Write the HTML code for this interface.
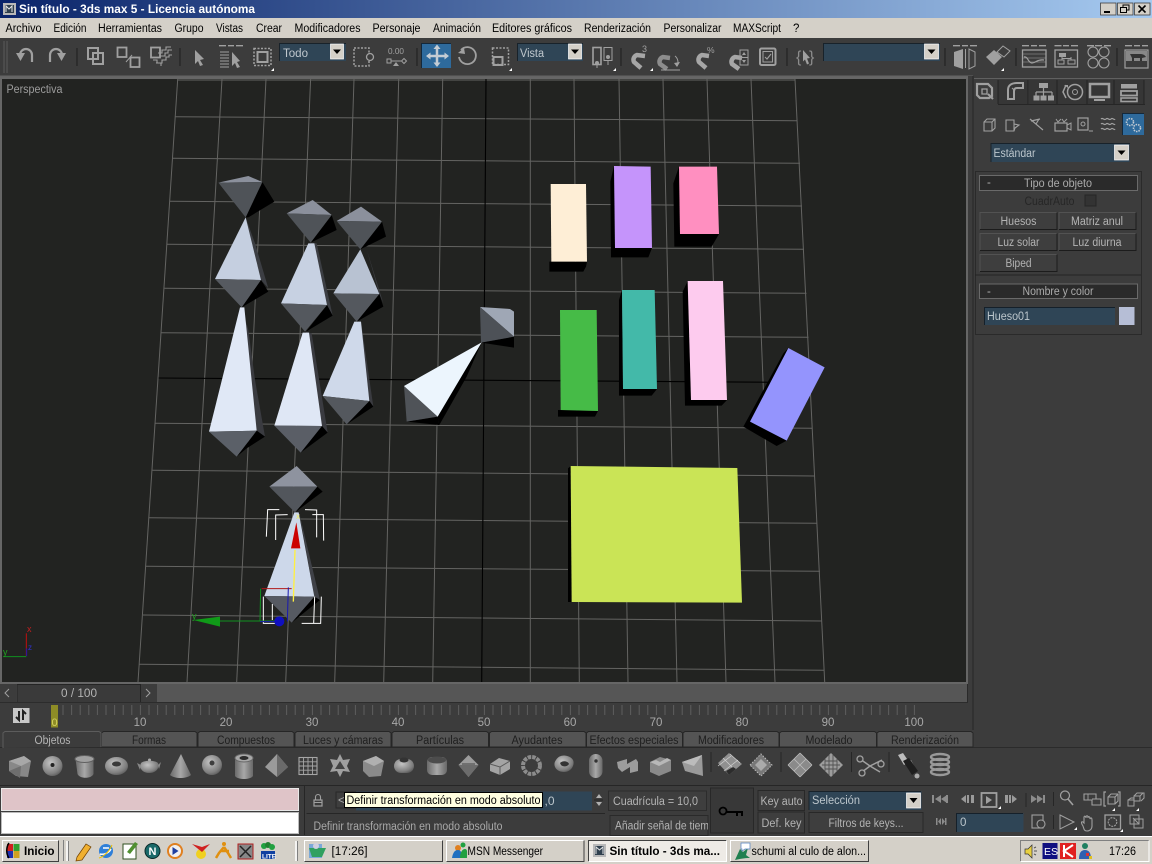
<!DOCTYPE html>
<html><head><meta charset="utf-8"><title>Sin título - 3ds max 5</title>
<style>
html,body{margin:0;padding:0;background:#3c3c3c;width:1152px;height:864px;overflow:hidden}
svg{display:block;position:absolute;left:0;top:0}
text{font-family:"Liberation Sans",sans-serif;font-size:11.5px;fill:#b4b4b4;white-space:pre}
.m{fill:#000;font-size:11.5px}
.c{text-anchor:middle}
.l{fill:#a8a8a8}
.g line{stroke:#646462;stroke-width:1}
.hi{stroke:#525252;fill:none}
.lo{stroke:#1c1c1c;fill:none}
.wh{stroke:#fff;fill:none}
.i{stroke:#a0a0a0;fill:none}
.f{fill:#a0a0a0;stroke:none}
.d{stroke:#a0a0a0;stroke-width:1.5;fill:none;stroke-dasharray:2 1.5}
</style></head><body>
<svg width="1152" height="864" viewBox="0 0 1152 864" xmlns="http://www.w3.org/2000/svg">
<defs>
<linearGradient id="tb" x1="0" x2="1" y1="0" y2="0"><stop offset="0" stop-color="#0a246a"/><stop offset="1" stop-color="#a6caf0"/></linearGradient>
<radialGradient id="s" cx=".4" cy=".35" r=".75"><stop offset="0" stop-color="#c4c4c4"/><stop offset=".7" stop-color="#808080"/><stop offset="1" stop-color="#505050"/></radialGradient>
<linearGradient id="v" x1="0" x2="1" y1="0" y2="0"><stop offset="0" stop-color="#6a6a6a"/><stop offset=".5" stop-color="#a8a8a8"/><stop offset="1" stop-color="#686868"/></linearGradient>
</defs>

<!-- title bar -->
<rect x="0" y="0" width="1152" height="18" fill="url(#tb)"/>
<rect x="3" y="3" width="13" height="12" fill="#b8b8b8"/><rect x="5" y="5" width="9" height="8" fill="#30404e"/><path d="M6 12V6l3 3 3-3v6" stroke="#e8e8e8" fill="none"/>
<text x="19" y="13" textLength="236" lengthAdjust="spacingAndGlyphs" style="fill:#fff;font-weight:bold;font-size:12px">Sin título - 3ds max 5 - Licencia autónoma</text>
<g>
<rect x="1100.5" y="3" width="15.5" height="12" fill="#d4d0c8" stroke="#404040" stroke-width=".8"/><rect x="1104" y="11" width="6" height="2" fill="#000"/>
<rect x="1117.5" y="3" width="15.5" height="12" fill="#d4d0c8" stroke="#404040" stroke-width=".8"/><rect x="1123" y="5" width="6" height="5" fill="none" stroke="#000"/><rect x="1120.5" y="7.5" width="6" height="5" fill="#d4d0c8" stroke="#000"/>
<rect x="1134.5" y="3" width="15.5" height="12" fill="#d4d0c8" stroke="#404040" stroke-width=".8"/><path d="M1138.5 5.5l7 7m0-7l-7 7" stroke="#000" stroke-width="1.6"/>
</g>

<!-- menu -->
<rect x="0" y="18" width="1152" height="20" fill="#d4d0c8"/>
<g>
<text class="m" x="5.5" y="32" textLength="36" lengthAdjust="spacingAndGlyphs">Archivo</text>
<text class="m" x="53.5" y="32" textLength="33" lengthAdjust="spacingAndGlyphs">Edición</text>
<text class="m" x="98" y="32" textLength="64" lengthAdjust="spacingAndGlyphs">Herramientas</text>
<text class="m" x="174.5" y="32" textLength="29" lengthAdjust="spacingAndGlyphs">Grupo</text>
<text class="m" x="216" y="32" textLength="27" lengthAdjust="spacingAndGlyphs">Vistas</text>
<text class="m" x="256" y="32" textLength="26" lengthAdjust="spacingAndGlyphs">Crear</text>
<text class="m" x="294.5" y="32" textLength="66" lengthAdjust="spacingAndGlyphs">Modificadores</text>
<text class="m" x="372.5" y="32" textLength="48" lengthAdjust="spacingAndGlyphs">Personaje</text>
<text class="m" x="433" y="32" textLength="48" lengthAdjust="spacingAndGlyphs">Animación</text>
<text class="m" x="492" y="32" textLength="80" lengthAdjust="spacingAndGlyphs">Editores gráficos</text>
<text class="m" x="584" y="32" textLength="67" lengthAdjust="spacingAndGlyphs">Renderización</text>
<text class="m" x="663.5" y="32" textLength="58" lengthAdjust="spacingAndGlyphs">Personalizar</text>
<text class="m" x="733" y="32" textLength="48" lengthAdjust="spacingAndGlyphs">MAXScript</text>
<text class="m" x="793" y="32">?</text>
</g>

<!-- toolbar -->
<rect x="0" y="38" width="1152" height="38" fill="#3c3c3c"/>
<path d="M4 41V73M7 41V73" stroke="#565656" stroke-width="1.2"/>
<path d="M77 48V66M180 48V66M417 48V66M621 48V66M787 48V66M945 48V66M1016 48V66M1117 48V66" stroke="#232323" stroke-width="1.2"/>
<!-- undo/redo -->
<path d="M20 58v-3a6 6 0 0 1 12 0v7" class="i" stroke-width="2.2"/><path d="M16 53h9l-4.500 8z" class="f"/>
<path d="M62 58v-3a6 6 0 0 0-12 0v7" class="i" stroke-width="2.200"/><path d="M66 53h-9l4.500 8z" class="f"/>
<!-- link etc -->
<rect x="88" y="48" width="10" height="11" class="i" stroke-width="2"/><rect x="93" y="53" width="10" height="11" class="i" stroke-width="2"/>
<rect x="117.500" y="47.500" width="9" height="9.500" class="i" stroke-width="1.800"/><rect x="130.500" y="57.500" width="9" height="9.500" class="i" stroke-width="1.800"/><path d="M126 62l6-7" class="i" stroke-width="1"/>
<rect x="151" y="47.500" width="9" height="10" class="i" stroke-width="1.800"/><path d="M153 60h4v3h4v3M158 53h4v-3h4v-3h5M160 56h5v-3h3v-3h4M156 63h6v-3h4v-3h3v-2h3" class="i" stroke-width="1.100"/>
<!-- select -->
<path d="M195 50l9 9-4 1 3 5-3 1-2-5-3 3z" class="f"/>
<path d="M219 45.700h7M228 45.700h6M236 45.700h7" class="i" stroke-width="1.400"/><path d="M220 52h9M220 55h9M220 58h9M220 61h9M220 64h9M220 67h9" class="i" stroke-width="1"/><path d="M232 52l8 9-3 1 3 5-3 1-2-5-3 3z" class="f"/>
<rect x="254" y="48.500" width="17" height="17" class="d"/><rect x="257.500" y="52" width="10" height="10" class="i" stroke-width="2"/>
<path d="M271 71l3-3v3z" fill="#fff"/>
<!-- Todo dropdown -->
<rect x="279" y="43" width="67" height="18" fill="#2f4556"/><path d="M279.500 61V43.500H346" stroke="#18222a" fill="none"/>
<text x="283" y="57" textLength="25" lengthAdjust="spacingAndGlyphs" style="fill:#c0c8ce">Todo</text>
<rect x="330.500" y="44" width="13" height="15" fill="#d4d0c8" stroke="#fff" stroke-width=".7"/><path d="M333 49.500h8l-4 4.500z" fill="#000"/>
<!-- filter -->
<rect x="354" y="48" width="15" height="18" class="d"/><circle cx="370" cy="57" r="3.500" class="i" stroke-width="1.300" style="fill:#3c3c3c"/>
<text x="388" y="54" textLength="16" lengthAdjust="spacingAndGlyphs" style="font-size:8.500px;fill:#a0a0a0">0.00</text>
<rect x="387" y="59" width="4" height="4" class="i" stroke-width="1"/><path d="M391 61h10" class="i" stroke-width="1"/><path d="M396 62l-3 4h6z" class="f"/><path d="M404 58.500l2.500 2.500-2.500 2.500-2.500-2.500z" class="i" stroke-width="1"/>
<!-- move -->
<rect x="421" y="43" width="30" height="25" fill="#2e6a9c"/><path d="M421.500 68V43.500H451" stroke="#14283a" fill="none"/>
<path d="M428 56h19M437 46.500v19" stroke="#c4ccd4" stroke-width="2.500"/><path d="M437 44.500l3.500 4.500h-7zM437 67l3.500-4.500h-7zM426 56l4.500-3.500v7zM449 56l-4.500-3.500v7z" fill="#c4ccd4"/>
<!-- rotate -->
<path d="M461 50a8.500 8.500 0 1 1-2 7" class="i" stroke-width="1.800"/><path d="M458 53l6-5 1 6z" class="f"/>
<!-- scale -->
<rect x="492.500" y="48" width="16" height="16.500" class="d"/><rect x="493.500" y="57" width="9" height="8" class="i" stroke-width="2"/>
<path d="M509 71l3-3v3z" fill="#fff"/>
<!-- Vista dropdown -->
<rect x="517" y="43" width="66" height="18" fill="#2f4556"/><path d="M517.500 61V43.500H583" stroke="#18222a" fill="none"/>
<text x="520" y="57" textLength="24" lengthAdjust="spacingAndGlyphs" style="fill:#c0c8ce">Vista</text>
<rect x="568.500" y="44" width="13" height="15" fill="#d4d0c8" stroke="#fff" stroke-width=".7"/><path d="M571 49.500h8l-4 4.500z" fill="#000"/>
<!-- pivot -->
<rect x="593" y="47.500" width="8" height="17" class="i" stroke-width="1.600"/><rect x="604" y="47.500" width="8" height="13" class="i" stroke-width="1"/><circle cx="597" cy="63" r="2" class="f"/><circle cx="608" cy="57" r="2" class="f"/><path d="M597 65v3M608 60v5" class="i" stroke-width="1"/>
<path d="M613 71l3-3v3z" fill="#fff"/>
<!-- magnets -->
<g fill="none" stroke-width="4.500">
<path d="M645 56l-8-1a5 5 0 0 0-3 7l7 6" stroke="#a6a6a6"/>
<path d="M670 58l-7-1a5 5 0 0 0-3 7l7 5" stroke="#8c8c8c"/>
<path d="M709 56l-7-1a5 5 0 0 0-3 7l7 6" stroke="#a6a6a6"/>
<path d="M742 58l-7-1a5 5 0 0 0-3 7l7 5" stroke="#a6a6a6"/>
</g>
<text x="642" y="52" style="font-size:9px;fill:#a0a0a0">3</text>
<path d="M661 70h19M675 56a8 8 0 0 1 2 10" class="i" stroke-width="1"/><path d="M680 62l-3 5-3-4z" class="f"/>
<text x="707" y="53" style="font-size:8.500px;fill:#a0a0a0">%</text>
<rect x="740" y="50" width="8" height="15" class="i" stroke-width="1"/><path d="M744 52l-2 3h4zM744 63l-2-3h4z" class="f"/><path d="M740 57.500h8" class="i" stroke-width="1"/>
<path d="M650 71l3-3v3z" fill="#fff"/>
<rect x="760" y="48.500" width="15.500" height="16.500" rx="1.500" class="i" stroke-width="2"/><rect x="763" y="51.500" width="9.500" height="10.500" class="i" stroke-width="1"/><path d="M765 57l2 2 4-5" class="i" stroke-width="1.100"/>
<!-- {} -->
<text x="796" y="62" style="font-size:16px;fill:#8c8c8c">{</text><text x="809" y="62" style="font-size:16px;fill:#8c8c8c">}</text><path d="M803 50l7 8-3 .500 2 5-2 1-2-5-2 2z" class="f"/>
<!-- sel dropdown -->
<rect x="823" y="43" width="117" height="18" fill="#2f4556"/><path d="M823.500 61V43.500H940" stroke="#18222a" fill="none"/>
<rect x="924.500" y="44" width="14" height="15" fill="#d4d0c8" stroke="#fff" stroke-width=".7"/><path d="M927.500 49.500h8l-4 4.500z" fill="#000"/>
<!-- mirror -->
<path d="M953 45.700h7M962 45.700h6M970 45.700h7" class="i" stroke-width="1.400"/><path d="M954 52l9-3v20l-9-3z" class="f"/><path d="M975 52l-6-3v20l6-3z" class="i" stroke-width="1"/><path d="M965.500 49v19" class="i" stroke-width="1"/>
<!-- align -->
<path d="M986 57l8-7 8 7-8 8z" class="f"/><path d="M997 52l6-6 7 5-6 6z" class="i" stroke-width="1"/><path d="M1001 71l3-3v3z" fill="#fff"/>
<!-- track -->
<path d="M1022 45.700h7M1031 45.700h6M1039 45.700h7M1054.500 45.700h7M1063 45.700h6M1071 45.700h7M1087 45.700h7M1095 45.700h7M1104 45.700h7M1125 45.700h7M1134 45.700h6M1142 45.700h6" class="i" stroke-width="1.400"/>
<rect x="1022.500" y="50" width="23.500" height="17" class="i" stroke-width="1.300"/><path d="M1022 54h24M1022 58h24M1022 62h24" class="i" stroke-width=".6"/><path d="M1024 57c4-1 4 6 8 6s5-4 12-3" class="i" stroke-width="1.200"/>
<rect x="1055" y="50" width="22.500" height="17" class="i" stroke-width="1.300"/><rect x="1059" y="53" width="7" height="4" class="f"/><rect x="1068" y="60" width="7" height="4" class="i" stroke-width="1"/><rect x="1058" y="60" width="6" height="4" class="i" stroke-width="1"/><path d="M1062 57v3M1071 57v3M1062 58.500h9" class="i" stroke-width="1"/>
<g class="i" stroke-width="1.100"><circle cx="1093" cy="52" r="5"/><circle cx="1104" cy="52" r="5"/><circle cx="1093" cy="63" r="5"/><circle cx="1104" cy="63" r="5"/></g>
<rect x="1125" y="50" width="23" height="18" class="i" stroke-width="1.200"/><rect x="1126" y="51" width="21" height="10" fill="#888"/><path d="M1130 54h10c3 0 5 1 6 3l-4 1v3h-2v-3h-6v3h-2v-3z" fill="#333"/>
<path d="M0 76.500H973" stroke="#646464" stroke-width="2"/>

<!-- viewport -->
<rect x="0" y="77" width="968" height="607" fill="#666"/>
<rect x="2" y="79" width="964" height="603" fill="#222321"/>
<text x="6.500" y="93" textLength="56" lengthAdjust="spacingAndGlyphs" style="fill:#9c9c9c">Perspectiva</text>
<g class="g">
<line x1="177.700" y1="79" x2="138" y2="682"/><line x1="222" y1="79" x2="187" y2="682"/><line x1="266" y1="79" x2="236.700" y2="682"/><line x1="310.600" y1="79" x2="285.700" y2="682"/><line x1="354" y1="79" x2="334.700" y2="682"/><line x1="398.700" y1="79" x2="383.700" y2="682"/><line x1="442.700" y1="79" x2="432.700" y2="682"/><line x1="530.300" y1="79" x2="530.300" y2="682"/><line x1="574" y1="79" x2="579.300" y2="682"/><line x1="619" y1="79" x2="628" y2="682"/><line x1="663" y1="79" x2="677" y2="682"/><line x1="707" y1="79" x2="726" y2="682"/><line x1="751" y1="79" x2="775" y2="682"/><line x1="795" y1="79" x2="824.700" y2="682"/>
<line x1="177.700" y1="80" x2="795" y2="80"/><line x1="175" y1="116.700" x2="797" y2="120.700"/><line x1="172.500" y1="158.300" x2="800" y2="163.300"/><line x1="170" y1="201.300" x2="802" y2="206"/><line x1="167" y1="244.300" x2="804" y2="249.300"/><line x1="164.500" y1="288.300" x2="806.500" y2="293.300"/><line x1="161.500" y1="332.700" x2="808.500" y2="337.300"/><line x1="155.500" y1="423.300" x2="812.500" y2="428.300"/><line x1="152.500" y1="470.300" x2="815" y2="476"/><line x1="149" y1="517.700" x2="817" y2="523.300"/><line x1="146" y1="566.300" x2="820" y2="571.300"/><line x1="143" y1="615" x2="822" y2="621"/><line x1="139.500" y1="664.300" x2="824" y2="670.300"/>
</g>
<path d="M486 79L481.700 682M158.500 378L810.500 382.500" stroke="#000" stroke-width="1.100" fill="none"/>

<!-- boxes -->
<g transform="translate(530 150) scale(.33333)">
<polygon points="58,335 171,335 168,350 160,365 58,365" fill="#000"/>
<polygon points="62,102 168,102 171,335 64,335" fill="#feeed6"/>
<polygon points="241,95 252,48 255,294 366,294 355,322 243,322" fill="#000"/>
<polygon points="252,48 362,50 366,294 255,294" fill="#c594fb"/>
<polygon points="430,100 447,50 450,252 567,252 545,290 433,290" fill="#000"/>
<polygon points="447,50 561,50 567,252 450,252" fill="#ff8fc0"/>
<polygon points="84,780 204,783 195,800 84,800" fill="#000"/>
<polygon points="90,480 200,480 204,783 92,780" fill="#46bb47"/>
<polygon points="267,450 276,420 279,717 381,717 365,737 267,737" fill="#000"/>
<polygon points="276,420 374,420 381,717 279,717" fill="#43b9a9"/>
<polygon points="458,425 473,393 483,750 591,750 575,767 465,767" fill="#000"/>
<polygon points="473,393 579,393 591,750 483,750" fill="#fdcbee"/>
<polygon points="760,610 775,594 770,872 740,888 640,830" fill="#000"/>
<polygon points="775,594 884,652 770,872 660,815" fill="#9494fd"/>
</g>
<g transform="translate(480 400) scale(.33333)">
<polygon points="264,205 272,198 275,606 264,606" fill="#000"/>
<polygon points="272,198 772,204 786,608 275,606" fill="#cae456"/>
</g>

<!-- bones -->
<g transform="translate(180 160) scale(.33333)">
<polygon points="247,66 283,125 205,172 197,172" fill="#000"/>
<polygon points="115,68 205,48 247,66" fill="#8b909c"/>
<polygon points="115,68 247,66 197,172" fill="#4f5358"/>
<polygon points="197,172 225,250 265,385 243,360" fill="#3c3e43"/>
<polygon points="197,172 243,360 105,357" fill="#c5cfe0"/>
<polygon points="243,360 265,395 185,442" fill="#000"/>
<polygon points="105,357 243,360 185,442" fill="#565a60"/>
<polygon points="185,442 205,510 225,660 255,830 230,812" fill="#3a3b40"/>
<polygon points="180,442 193,442 230,812 87,815" fill="#e0e8f6"/>
<polygon points="230,812 255,830 200,865 170,890" fill="#000"/>
<polygon points="87,815 230,812 170,890" fill="#5b6068"/>

<polygon points="455,165 470,210 392,248" fill="#000"/>
<polygon points="320,160 398,120 455,165" fill="#8b909c"/>
<polygon points="320,160 455,165 392,248" fill="#4f5358"/>
<polygon points="392,248 410,250 458,467 441,435" fill="#3c3e43"/>
<polygon points="385,250 403,250 441,435 303,430" fill="#c7d1e2"/>
<polygon points="441,435 458,467 378,515" fill="#000"/>
<polygon points="303,430 441,435 375,515" fill="#54585e"/>
<polygon points="378,515 395,520 443,818 426,798" fill="#3a3b40"/>
<polygon points="368,518 387,518 426,798 283,797" fill="#dfe7f5"/>
<polygon points="426,798 443,818 362,878" fill="#000"/>
<polygon points="283,797 426,798 362,878" fill="#5a5e66"/>

<polygon points="606,185 618,230 541,268" fill="#000"/>
<polygon points="470,183 543,140 606,185" fill="#8b909c"/>
<polygon points="470,183 606,185 541,268" fill="#4f5358"/>
<polygon points="560,268 610,430 598,402" fill="#3c3e43"/>
<polygon points="541,268 598,402 460,400" fill="#b8c2d2"/>
<polygon points="598,402 610,440 530,485" fill="#000"/>
<polygon points="460,400 598,402 530,485" fill="#54585e"/>
<polygon points="543,485 580,740 568,723" fill="#3a3b40"/>
<polygon points="523,485 543,485 568,723 428,708" fill="#cfd9ea"/>
<polygon points="568,723 580,740 500,793" fill="#000"/>
<polygon points="428,708 568,723 500,793" fill="#54585e"/>

<polygon points="1002,530 1002,563 903,548" fill="#000"/>
<polygon points="900,441 990,447 1002,455 1002,530" fill="#9fa7b5"/>
<polygon points="900,441 1002,530 903,548" fill="#4d5157"/>
<polygon points="680,785 773,770 778,795" fill="#000"/>
<polygon points="905,547 860,650 778,795 773,770" fill="#000"/>
<polygon points="672,678 773,770 680,785" fill="#4f5358"/>
<polygon points="905,547 773,770 672,678" fill="#ecf5fd"/>
</g>
<g transform="translate(180 460) scale(.33333)">
<polygon points="412,80 428,95 345,157" fill="#000"/>
<polygon points="268,80 350,18 412,80" fill="#8e939f"/>
<polygon points="268,80 412,80 345,157" fill="#52565c"/>
<polygon points="358,160 420,420 403,410" fill="#3f4147"/>
<polygon points="343,157 356,157 403,410 253,408" fill="#cdd8ea"/>
<polygon points="403,410 420,420 335,488" fill="#000"/>
<polygon points="253,408 403,410 335,488" fill="#565a62"/>
</g>
<!-- gizmo -->
<g transform="translate(0 400) scale(.33333)" fill="none">
<g stroke="#fff" stroke-width="3">
<path d="M799 410L803 329H838M827 420V345L863 344M915 329L950 330V412M937 344H970L971 422"/>
<path d="M790 590V670H825M817 612V660M905 670H962L964 590M941 670L944 590"/>
</g>
<path d="M885 450L880 605" stroke="#fff040" stroke-width="4"/>
<polygon points="889,367 873,445 901,445" fill="#cc0000"/>
<path d="M875 566H785" stroke="#b01818" stroke-width="3"/>
<path d="M782 566L780 664M660 663H825" stroke="#109020" stroke-width="3"/>
<path d="M865 562L862 664M780 665H840" stroke="#1818b0" stroke-width="3"/>
<circle cx="838" cy="664" r="15" fill="#1010c0"/>
<polygon points="580,660 660,650 660,680" fill="#109a18"/>
<path d="M79 700V768" stroke="#c01010" stroke-width="3"/>
<path d="M10 770H79" stroke="#109020" stroke-width="3"/>
<path d="M80 745V768" stroke="#1818b0" stroke-width="3"/>
</g>
<text x="296" y="519" style="font-size:8px;fill:#f0f060">x</text>
<text x="192" y="619" style="font-size:9px;fill:#20a020">y</text>
<text x="27" y="632" style="font-size:9px;fill:#c02020">x</text>
<text x="3" y="655" style="font-size:9px;fill:#20a020">y</text>
<text x="28" y="650" style="font-size:8px;fill:#3030d0">z</text>

<!-- right panel -->
<rect x="968" y="76" width="184" height="654" fill="#3c3c3c"/>
<path d="M973 76V730" stroke="#262626" stroke-width="1"/>
<path d="M974 78.500H1152" stroke="#606060"/>
<rect x="974" y="80" width="24" height="26" fill="#3c3c3c"/>
<rect x="998.500" y="80" width="30" height="24" fill="#363636"/><rect x="1029" y="80" width="29" height="24" fill="#363636"/><rect x="1058" y="80" width="29" height="24" fill="#363636"/><rect x="1087" y="80" width="27" height="24" fill="#363636"/><rect x="1114.500" y="80" width="30" height="24" fill="#363636"/>
<path d="M998 104V80M1028 104V80M1057 104V80M1087 104V80M1114 104V80M1144 104V80" stroke="#232323"/>
<path d="M998 104.500H1145" stroke="#262626"/>
<path d="M977 84h11l4 4v8l-3 2h-9l-3-3z" class="i" stroke-width="2.200"/><path d="M982 89h5v5h-5z" class="i" stroke-width="1.300"/><path d="M988 94l5 5" class="i" stroke-width="2"/>
<path d="M1008 99V90c0-5 4-7 9-7h6v5h-6c-2 0-3 1-3 3v8z" class="i" stroke-width="2"/><path d="M1012 88l3 3" class="i" stroke-width="1"/>
<rect x="1039" y="83" width="9" height="5" class="f"/><path d="M1043.500 88v4M1036 92h16M1036 92v4M1043.500 92v4M1052 92v4" class="i" stroke-width="1.200"/><rect x="1033.500" y="95.500" width="6" height="5" class="f"/><rect x="1040.500" y="95.500" width="6" height="5" class="f"/><rect x="1048" y="95.500" width="6" height="5" class="f"/>
<circle cx="1075" cy="92" r="7.500" class="i" stroke-width="1.500"/><circle cx="1075" cy="92" r="2.500" class="i" stroke-width="1"/><path d="M1066 85l-3 7 3 6" class="i" stroke-width="1.500"/><path d="M1064 85h4v3z" class="f"/>
<rect x="1090" y="84" width="19" height="13" class="i" stroke-width="2.500"/><path d="M1094 100h11" class="i" stroke-width="2"/>
<rect x="1121" y="84" width="16" height="4.500" class="f"/><rect x="1121" y="91" width="16" height="4.500" class="i" stroke-width="1.800"/><rect x="1121" y="98" width="16" height="3.500" class="i" stroke-width="1.600"/>
<!-- row2 icons -->
<path d="M984 122l3-3h8v9l-3 3h-8zM984 122h8v9M992 122l3-3" class="i" stroke-width="1.100"/>
<path d="M1006 120h8v4l5 1-4 3-1 3h-8zM1014 120v11" class="i" stroke-width="1.100"/>
<path d="M1030 119l13 11M1031 121l9-2M1036 124l3-5" class="i" stroke-width="1.200"/>
<rect x="1055" y="123" width="12" height="8" class="i" stroke-width="1.200"/><path d="M1067 125l4-2v7l-4-2M1056 119l2 3 3-3M1062 119l2 3 3-3" class="i" stroke-width="1"/>
<rect x="1078" y="118" width="10" height="12" class="i" stroke-width="1.200"/><circle cx="1083" cy="124" r="2" class="i" stroke-width="1"/><path d="M1089 131h4" class="i" stroke-width="1"/>
<path d="M1101 119c2-2 3 2 5 0s3 2 5 0 3 2 4 0M1101 124c2-2 3 2 5 0s3 2 5 0 3 2 4 0M1101 129c2-2 3 2 5 0s3 2 5 0 3 2 4 0" class="i" stroke-width="1.200"/>
<rect x="1122" y="113" width="22" height="22" fill="#2e6a9c"/><path d="M1122.500 135V113.500H1144" stroke="#14283a" fill="none"/>
<circle cx="1130" cy="122" r="3.500" class="i" stroke-width="1.600" style="stroke:#c4ccd4" stroke-dasharray="1.500 1"/><circle cx="1137" cy="128" r="3.500" class="i" stroke-width="1.600" style="stroke:#c4ccd4" stroke-dasharray="1.500 1"/>
<!-- Estandar -->
<rect x="990.500" y="143" width="139" height="19" fill="#2f4556"/><path d="M991 162V143.500H1130" stroke="#18222a" fill="none"/>
<text x="993.500" y="157" textLength="42" lengthAdjust="spacingAndGlyphs" style="fill:#bcc6cc">Estándar</text>
<rect x="1114.500" y="145" width="14" height="15" fill="#d4d0c8" stroke="#fff" stroke-width=".7"/><path d="M1117.500 150.500h8l-4 4.500z" fill="#000"/>
<!-- rollouts -->
<rect x="975.500" y="171.500" width="166" height="163" fill="none" stroke="#2a2a2a"/>
<path d="M975 275H1141" stroke="#232323"/>
<rect x="979.500" y="175.500" width="158" height="15" fill="#2a2a2a" stroke="#6a6a6a"/>
<text x="987" y="186" style="fill:#b0b0b0">-</text>
<text class="c" x="1058" y="187" textLength="68" lengthAdjust="spacingAndGlyphs" style="fill:#ababab">Tipo de objeto</text>
<text x="1024.500" y="205" textLength="50" lengthAdjust="spacingAndGlyphs" style="fill:#262626">CuadrAuto</text>
<rect x="1085" y="195" width="11" height="11" fill="#333" stroke="#262626"/>
<g>
<rect x="980" y="212.500" width="77" height="17" fill="#3e3e3e"/><path d="M980 229.500V212.500H1057" class="hi" /><path d="M980 229.500H1057V212.500" class="lo"/>
<rect x="1059" y="212.500" width="77" height="17" fill="#3e3e3e"/><path d="M1059 229.500V212.500H1136" class="hi"/><path d="M1059 229.500H1136V212.500" class="lo"/>
<rect x="980" y="233.500" width="77" height="17" fill="#3e3e3e"/><path d="M980 250.500V233.500H1057" class="hi"/><path d="M980 250.500H1057V233.500" class="lo"/>
<rect x="1059" y="233.500" width="77" height="17" fill="#3e3e3e"/><path d="M1059 250.500V233.500H1136" class="hi"/><path d="M1059 250.500H1136V233.500" class="lo"/>
<rect x="980" y="254.500" width="77" height="17" fill="#3e3e3e"/><path d="M980 271.500V254.500H1057" class="hi"/><path d="M980 271.500H1057V254.500" class="lo"/>
</g>
<text class="c" x="1018.500" y="225" textLength="36" lengthAdjust="spacingAndGlyphs">Huesos</text>
<text class="c" x="1097" y="225" textLength="52" lengthAdjust="spacingAndGlyphs">Matriz anul</text>
<text class="c" x="1018.500" y="246" textLength="42" lengthAdjust="spacingAndGlyphs">Luz solar</text>
<text class="c" x="1097" y="246" textLength="49" lengthAdjust="spacingAndGlyphs">Luz diurna</text>
<text class="c" x="1018.500" y="267" textLength="26" lengthAdjust="spacingAndGlyphs">Biped</text>
<rect x="979.500" y="284" width="158" height="14.500" fill="#2a2a2a" stroke="#6a6a6a"/>
<text x="987" y="295" style="fill:#b0b0b0">-</text>
<text class="c" x="1058" y="295" textLength="71" lengthAdjust="spacingAndGlyphs" style="fill:#ababab">Nombre y color</text>
<rect x="984" y="307" width="131" height="18" fill="#2f4556"/><path d="M984.500 325V307.500H1115" stroke="#15202a" fill="none"/>
<text x="987" y="320" textLength="43" lengthAdjust="spacingAndGlyphs" style="fill:#bcc6cc">Hueso01</text>
<rect x="1119" y="307" width="15.500" height="18" fill="#b6bed6"/>

<!-- timeline -->
<rect x="0" y="684" width="968" height="18" fill="#565656"/>
<rect x="0" y="684" width="16" height="18" fill="#3c3c3c"/><rect x="17" y="684" width="124" height="18" fill="#3a3a3a"/><path d="M17 702V684.500H140.500V702" stroke="#242424" fill="none"/><rect x="141" y="684" width="16" height="18" fill="#3c3c3c"/>
<path d="M9 689l-4 4 4 4M146 689l4 4-4 4" stroke="#a0a0a0" fill="none"/>
<text class="c" x="79" y="697" textLength="36" lengthAdjust="spacingAndGlyphs">0 / 100</text>
<rect x="0" y="702" width="968" height="1" fill="#2c2c2c"/>
<path d="M967.500 684v18" stroke="#2a2a2a"/>
<rect x="13" y="708" width="16.500" height="15" fill="#c8c8c8"/><path d="M19 711v9l-3-3M23 720v-9l3 3" stroke="#222" stroke-width="2" fill="none"/>
<path stroke="#5e5e5e" d="M63 705v10M71.600 705v10M80.200 705v10M88.800 705v10M97.400 705v10M106 705v10M114.600 705v10M123.200 705v10M131.800 705v10M140.400 705v10M149 705v10M157.600 705v10M166.200 705v10M174.800 705v10M183.400 705v10M192 705v10M200.600 705v10M209.200 705v10M217.800 705v10M226.400 705v10M235 705v10M243.600 705v10M252.200 705v10M260.800 705v10M269.400 705v10M278 705v10M286.600 705v10M295.200 705v10M303.800 705v10M312.400 705v10M321 705v10M329.600 705v10M338.200 705v10M346.800 705v10M355.400 705v10M364 705v10M372.600 705v10M381.200 705v10M389.800 705v10M398.400 705v10M407 705v10M415.600 705v10M424.200 705v10M432.800 705v10M441.400 705v10M450 705v10M458.600 705v10M467.200 705v10M475.800 705v10M484.400 705v10M493 705v10M501.600 705v10M510.200 705v10M518.800 705v10M527.400 705v10M536 705v10M544.600 705v10M553.200 705v10M561.800 705v10M570.400 705v10M579 705v10M587.600 705v10M596.200 705v10M604.800 705v10M613.400 705v10M622 705v10M630.600 705v10M639.200 705v10M647.800 705v10M656.400 705v10M665 705v10M673.600 705v10M682.200 705v10M690.800 705v10M699.400 705v10M708 705v10M716.600 705v10M725.200 705v10M733.800 705v10M742.400 705v10M751 705v10M759.600 705v10M768.200 705v10M776.800 705v10M785.400 705v10M794 705v10M802.600 705v10M811.200 705v10M819.800 705v10M828.400 705v10M837 705v10M845.600 705v10M854.200 705v10M862.800 705v10M871.400 705v10M880 705v10M888.600 705v10M897.200 705v10M905.800 705v10M914.400 705v10"/>
<rect x="51" y="705" width="7" height="22.500" fill="#8e8c26"/><text class="c" x="54.500" y="726" style="fill:#d4d260;font-size:11px">0</text>
<g>
<text class="c l" x="140" y="726">10</text><text class="c l" x="226" y="726">20</text><text class="c l" x="312" y="726">30</text><text class="c l" x="398" y="726">40</text><text class="c l" x="484" y="726">50</text><text class="c l" x="570" y="726">60</text><text class="c l" x="656" y="726">70</text><text class="c l" x="742" y="726">80</text><text class="c l" x="828" y="726">90</text><text class="c l" x="914" y="726">100</text>
</g>

<!-- tabs -->
<path d="M0 747.500H1152" stroke="#2b2b2b"/>
<g stroke="#262626" fill="#545454">
<path d="M101.500 747V733l2-1.500H195l2 1.500v14z"/><path d="M198 747V733l2-1.500H292l2 1.500v14z"/><path d="M295 747V733l2-1.500H389l2 1.500v14z"/><path d="M392 747V733l2-1.500H486.500l2 1.500v14z"/><path d="M489.500 747V733l2-1.500H584l2 1.500v14z"/><path d="M586.500 747V733l2-1.500H680.500l2 1.500v14z"/><path d="M683 747V733l2-1.500H777l2 1.500v14z"/><path d="M779.500 747V733l2-1.500H874.500l2 1.500v14z"/><path d="M877 747V733l2-1.500H971l2 1.500v14z"/>
</g>
<path d="M3 748V733l2-1.500H99l2 1.500v14" fill="#3c3c3c" stroke="#5c5c5c"/>
<text class="c" x="52.500" y="744" textLength="36" lengthAdjust="spacingAndGlyphs">Objetos</text>
<g>
<text class="c" x="149" y="744" textLength="34" lengthAdjust="spacingAndGlyphs" style="fill:#1e1e1e">Formas</text>
<text class="c" x="246" y="744" textLength="58" lengthAdjust="spacingAndGlyphs" style="fill:#1e1e1e">Compuestos</text>
<text class="c" x="343" y="744" textLength="80" lengthAdjust="spacingAndGlyphs" style="fill:#1e1e1e">Luces y cámaras</text>
<text class="c" x="440" y="744" textLength="48" lengthAdjust="spacingAndGlyphs" style="fill:#1e1e1e">Partículas</text>
<text class="c" x="537" y="744" textLength="51" lengthAdjust="spacingAndGlyphs" style="fill:#1e1e1e">Ayudantes</text>
<text class="c" x="634" y="744" textLength="89" lengthAdjust="spacingAndGlyphs" style="fill:#1e1e1e">Efectos especiales</text>
<text class="c" x="731" y="744" textLength="66" lengthAdjust="spacingAndGlyphs" style="fill:#1e1e1e">Modificadores</text>
<text class="c" x="829" y="744" textLength="47" lengthAdjust="spacingAndGlyphs" style="fill:#1e1e1e">Modelado</text>
<text class="c" x="925" y="744" textLength="68" lengthAdjust="spacingAndGlyphs" style="fill:#1e1e1e">Renderización</text>
</g>

<!-- primitives -->
<g>
<path d="M9 761l15-5 7 5-3 16-12-1-7-5z" fill="#888"/><path d="M9 761l12 5 10-5-7-5z" fill="#a8a8a8"/><path d="M21 766l-1 12-11-7z" fill="#6e6e6e"/>
<circle cx="52.500" cy="766" r="10" fill="url(#s)"/><circle cx="52.500" cy="765" r="2" fill="#222"/>
<path d="M75.500 759h18v15c-2 5-14 5-16 0z" fill="url(#v)"/><ellipse cx="84.500" cy="759" rx="9.500" ry="3.500" fill="#a0a0a0" stroke="#606060"/>
<ellipse cx="116.500" cy="766" rx="11.500" ry="9" fill="url(#s)"/><ellipse cx="116.500" cy="764" rx="4.500" ry="2.500" fill="#3a3a3a"/>
<path d="M141 763c-2 5 1 10 8 10s11-5 9-10c-3-3-14-3-17 0z" fill="url(#s)"/><path d="M141 765l-4-2 3 7zM158 765l3-3-2 7z" fill="#888"/><circle cx="149.500" cy="760" r="1.500" fill="#aaa"/>
<path d="M181 754l10 21c-5 4-16 4-21 0z" fill="url(#v)"/>
<circle cx="212" cy="765" r="10" fill="url(#s)"/><circle cx="212" cy="763" r="2.500" fill="#3e3e3e"/>
<path d="M235 758h18v18c-3 4-15 4-18 0z" fill="url(#v)"/><ellipse cx="244" cy="758" rx="9" ry="4" fill="#a8a8a8" stroke="#666"/><ellipse cx="244" cy="758" rx="4.500" ry="2" fill="#2c2c2c"/>
<path d="M277 754l11 13-11 10-12-10z" fill="#9a9a9a"/><path d="M277 754v23l11-10z" fill="#6a6a6a"/>
<rect x="299" y="757.500" width="18" height="17" fill="none" stroke="#a6a6a6" stroke-width="1.100"/><path d="M303.500 757.500v17M308 757.500v17M312.500 757.500v17M299 761.800h18M299 766h18M299 770.200h18" stroke="#a6a6a6" stroke-width=".9"/>
<path d="M340 754l3 6 7-1-3 7 3 6-7-1-3 6-3-6-7 1 3-6-3-7 7 1z" fill="#a0a0a0"/><path d="M340 761l5 8h-10z" fill="#444"/>
<path d="M363 761l13-5 8 5-3 15-12 1-6-6z" fill="#8a8a8a"/><path d="M363 761l11 5 10-5-8-5z" fill="#b0b0b0"/>
<rect x="394" y="759" width="20" height="14" rx="7" fill="url(#s)"/><ellipse cx="404" cy="760" rx="4.500" ry="2.500" fill="#333"/>
<rect x="427" y="757" width="20" height="18" rx="5" fill="url(#v)"/><ellipse cx="437" cy="760" rx="9" ry="3.500" fill="#4c4c4c"/>
<path d="M468.500 755l10 10-10 12-10-12z" fill="#9c9c9c"/><path d="M458.500 765h20l-10 12z" fill="#6c6c6c"/><path d="M462 764h13" stroke="#444"/>
<path d="M490 764l9-6 11 3v8l-10 6-10-4z" fill="#a4a4a4"/><path d="M490 764l10 3 10-6M500 767v8" stroke="#5a5a5a" fill="none"/>
<circle cx="531.500" cy="765.500" r="8.500" fill="none" stroke="#8c8c8c" stroke-width="4" stroke-dasharray="3.500 1"/>
<path d="M556 760c4-7 14-5 17 0 2 4-1 12-9 12-8 0-12-7-8-12z" fill="url(#s)"/><path d="M560 763c3-3 8-2 9 1-2 3-6 3-8 1" fill="#333"/>
<rect x="589" y="754" width="13.500" height="24" rx="6.700" fill="url(#v)"/><circle cx="596" cy="761" r="1.700" fill="#333"/>
<path d="M617 762l10-3v5l9-5 2 3v9l-8 2v-6l-8 5-4-4z" fill="#9c9c9c"/>
<path d="M650 762l10-5 11 3v11l-12 5-9-4z" fill="#8a8a8a"/><path d="M650 762l9 4 12-6-4-2-7 4-4-2z" fill="#b8b8b8"/>
<path d="M682 762l20-7 1 21-18-5z" fill="#9a9a9a"/><path d="M682 762l20-7-8 11z" fill="#bcbcbc"/>
<path d="M711 752v20M781 752v20M851.500 752v20M889 752v20" stroke="#262626"/>
<path d="M718 763l11-10 13 11-13 11z" fill="#909090"/><path d="M723 758l11 11M730 754l10 9M718 766l13-10M724 771l14-11" stroke="#d0d0d0" stroke-width=".7"/><path d="M726 771l7-4 3 2-7 6z" fill="#2c2c2c"/>
<path d="M750 765l11-11 11 11-11 11z" fill="#787878" stroke="#bbb" stroke-dasharray="1.500 1.500"/><path d="M755 765l6-6 6 6-6 6z" fill="#aaa"/>
<path d="M788 765l12-12 12 12-12 12z" fill="#8a8a8a"/><path d="M794 759l12 12M800 753l12 12M788 765l12 12M794 771l12-12M800 777l12-12M788 765l12-12" stroke="#bcbcbc" stroke-width=".8"/>
<path d="M819 765l12-12 12 12-12 12z" fill="#9c9c9c"/><path d="M822 765h18M825 759v12M829 755v20M833 755v20M837 759v12M825 761h12M825 769h12" stroke="#525252" stroke-width=".9"/>
<path d="M860 759l10 7-8 6M870 766l12-6M870 766l10 6" stroke="#a0a0a0" stroke-width="1.500" fill="none"/><circle cx="860" cy="759" r="3" fill="#3c3c3c" stroke="#a0a0a0" stroke-width="1.300"/><circle cx="862" cy="773" r="3" fill="#3c3c3c" stroke="#a0a0a0" stroke-width="1.300"/><circle cx="881" cy="764" r="3" fill="#3c3c3c" stroke="#a0a0a0" stroke-width="1.300"/>
<path d="M898 755l5-2 6 9-5 3zM905 763l6-3 6 11-5 3z" fill="#bcbcbc"/><path d="M903 761l6-3 9 13-6 4z" fill="#1e1e1e"/><circle cx="917" cy="776" r="2.500" fill="#aaa"/>
<g fill="none" stroke="#999" stroke-width="2.400"><ellipse cx="940" cy="757" rx="9" ry="3"/><ellipse cx="940" cy="762" rx="9" ry="3"/><ellipse cx="940" cy="767" rx="9" ry="3"/><ellipse cx="940" cy="772" rx="9" ry="3"/></g>
</g>

<!-- bottom panels -->
<path d="M0 785.500H1152" stroke="#262626"/>
<rect x="301" y="786" width="851" height="50" fill="#3c3c3c"/>
<rect x="1.500" y="788.500" width="297" height="22" fill="#dfc4c8" stroke="#e8e8e8"/>
<rect x="1.500" y="812.500" width="297" height="21" fill="#fff" stroke="#bbb"/>
<path d="M304.500 786V835" stroke="#262626"/><path d="M306.500 813.500H605" stroke="#262626"/>
<rect x="314" y="800" width="8" height="6" class="i" stroke-width="1.200"/><path d="M315.500 800v-3a2.500 2.500 0 0 1 5 0v3M314 802.500h8" class="i" stroke-width="1.100"/>
<rect x="336" y="792" width="20" height="16" fill="#3e3e3e" stroke="#272727"/>
<text x="338" y="804" style="fill:#aaa">&lt;</text>
<rect x="356" y="791.500" width="236" height="19" fill="#2f4556"/>
<text x="544.500" y="805" textLength="10" lengthAdjust="spacingAndGlyphs" style="fill:#bcc6cc">,0</text>
<rect x="344.500" y="792.500" width="198" height="15" fill="#ffffe1" stroke="#000"/>
<text x="346.500" y="804" textLength="194" lengthAdjust="spacingAndGlyphs" style="fill:#000;font-size:11.500px">Definir transformación en modo absoluto</text>
<path d="M599 794l-3 4h6zM599 806l-3-4h6z" fill="#b0b0b0"/><path d="M594 800h9" stroke="#242424"/>
<rect x="608.500" y="791" width="98" height="19.500" fill="#3e3e3e" stroke="#2c2c2c"/>
<text x="613" y="805" textLength="85" lengthAdjust="spacingAndGlyphs">Cuadrícula = 10,0</text>
<text x="313.500" y="830" textLength="189" lengthAdjust="spacingAndGlyphs" style="fill:#a8a8a8">Definir transformación en modo absoluto</text>
<rect x="610" y="815.500" width="98" height="20" fill="#3e3e3e" stroke="#2a2a2a"/>
<svg x="610" y="815" width="98" height="20"><text x="5" y="14.500" textLength="94" lengthAdjust="spacingAndGlyphs">Añadir señal de tiem</text></svg>
<rect x="710.500" y="788" width="43" height="45" fill="#383838" stroke="#282828"/>
<circle cx="723" cy="811" r="3.500" fill="none" stroke="#000" stroke-width="1.800"/><path d="M726 811h17v5h-2v-3h-3v3h-2v-3h-9z" fill="#000"/>
<rect x="758" y="790.500" width="46.500" height="20" fill="#3e3e3e" stroke="#282828"/>
<text x="760.500" y="805" textLength="42" lengthAdjust="spacingAndGlyphs">Key auto</text>
<rect x="758" y="812" width="46.500" height="21" fill="#3e3e3e" stroke="#282828"/>
<text x="761.500" y="827" textLength="40" lengthAdjust="spacingAndGlyphs">Def. key</text>
<rect x="808.500" y="791" width="113" height="19" fill="#2f4556"/><path d="M809 810V791.500H921" stroke="#18222a" fill="none"/>
<text x="812" y="804" textLength="48" lengthAdjust="spacingAndGlyphs" style="fill:#bcc6cc">Selección</text>
<rect x="906.500" y="793" width="14" height="15" fill="#d4d0c8" stroke="#fff" stroke-width=".7"/><path d="M909.500 798h8l-4 5z" fill="#000"/>
<rect x="809" y="812.500" width="114" height="20" fill="#3e3e3e" stroke="#282828"/>
<text class="c" x="866" y="827" textLength="75" lengthAdjust="spacingAndGlyphs">Filtros de keys...</text>
<!-- playback -->
<g>
<path d="M932 795h2v8h-2zM941 795v8l-6-4zM947 795v8l-6-4zM946 795h2v8h-2z" fill="#8c8c8c"/>
<path d="M961 799l5-4v8zM967 795h2v8h-2zM971 795h3v8h-3z" fill="#9a9a9a"/>
<path d="M1005 795h3v8h-3zM1009 795h2v8h-2zM1012 795l5 4-5 4z" fill="#9a9a9a"/>
<path d="M1031 795l6 4-6 4zM1037 795l6 4-6 4zM1043 795h2v8h-2z" fill="#8c8c8c"/>
<path d="M936 818h1.500v7H936zM941 818v7l-3-3.500zM942 818l3 3.500-3 3.500zM945 818h1.500v7H945z" fill="#8c8c8c"/>
</g>
<rect x="981.500" y="793" width="15" height="14" fill="none" stroke="#a0a0a0" stroke-width="1.800"/><path d="M986 796l6 4-6 4z" fill="#a0a0a0"/><path d="M998 809l3-3v3z" fill="#fff"/>
<path d="M1026 793v14M1053.500 792v14M1053.500 815v14" stroke="#262626"/>
<rect x="956" y="813" width="67.500" height="19" fill="#2f4556"/><path d="M956.500 832V813.500H1023" stroke="#15202a" fill="none"/>
<text x="960" y="826" style="fill:#bcc6cc">0</text>
<rect x="1032" y="815" width="11" height="13" class="i" stroke-width="1.100"/><circle cx="1041" cy="824" r="4" class="i" stroke-width="1.100" style="fill:#3c3c3c"/>
<!-- nav icons -->
<circle cx="1065" cy="795.500" r="4.500" class="i" stroke-width="1.200"/><path d="M1068 799l5 6" class="i" stroke-width="1.600"/>
<path d="M1088 794h8v5h5v6h-9v-5h-8v-6h4z" class="i" stroke-width="1.100"/><path d="M1088 794v6M1092 800v5" class="i" stroke-width=".9"/><path d="M1096 799h-4" class="i" stroke-width="1"/>
<path d="M1106 792h-2v14h2M1118 792h2v14h-2" class="i" stroke-width="1.200"/><path d="M1108 797l3-3h7v7l-3 3h-7zM1108 797h7v7M1115 797l3-3" class="i" stroke-width="1.100"/>
<path d="M1134 796h6v5h-6zM1134 796l3-3h7v5l-3 3M1140 796l3-3M1128 800l3-2h3M1128 800h6v6h-6z" class="i" stroke-width="1"/>
<path d="M1060 815l14 7-14 7z" class="i" stroke-width="1"/><path d="M1074 830l3-3v3z" fill="#fff"/>
<path d="M1083 826c-2-3-2-5 0-4l1 1v-6c1-2 2 0 2 1 0-3 2-3 2 0 0-2 2-2 2 1 1-2 2-1 2 1v6c0 3-2 5-5 5s-3-2-4-5z" class="i" stroke-width="1.100"/>
<rect x="1105" y="815" width="15.500" height="14" class="i" stroke-width="1.300"/><circle cx="1112.500" cy="822" r="4.300" class="i" stroke-width="1.100" stroke-dasharray="2 1"/><path d="M1120 832l3-3v3z" fill="#fff"/>
<rect x="1130" y="815" width="9" height="9" class="i" stroke-width="1"/><rect x="1134" y="819" width="9" height="9" class="i" stroke-width="1"/><path d="M1133 818l6 6" class="i" stroke-width="1"/>
<path d="M1112 811l3-3v3zM1136 811l3-3v3z" fill="#fff"/>

<!-- taskbar -->
<rect x="0" y="836" width="1152" height="28" fill="#d4d0c8"/><path d="M0 836.500H1152" stroke="#fff"/>
<rect x="2.500" y="840.500" width="56" height="21" fill="#d4d0c8"/><path d="M2.500 861.500V840.500H58.500" class="wh"/><path d="M2.500 861.500H58.500V840.500" stroke="#404040" fill="none"/>
<rect x="7" y="844" width="6" height="7" fill="#d02020"/><rect x="13.500" y="844" width="6" height="7" fill="#30a030"/><rect x="7" y="851" width="6" height="7" fill="#2030b0"/><rect x="13.500" y="851" width="6" height="7" fill="#d0a020"/><path d="M9 843c-3 4-3 11 0 15" stroke="#000" fill="none" stroke-width="1.500"/>
<text x="24" y="855" textLength="30.500" lengthAdjust="spacingAndGlyphs" style="fill:#000;font-weight:bold;font-size:11.500px">Inicio</text>
<path d="M63.500 840v21" stroke="#808080"/><path d="M67 841v20" stroke="#fff" stroke-width="1.500"/><path d="M68.500 841v20" stroke="#808080"/>
<!-- quick launch -->
<g>
<path d="M77 857l9-13 5 3-9 13-6 1z" fill="#f0b030" stroke="#704000" stroke-width=".7"/>
<circle cx="106" cy="851" r="7" fill="#2f7fd8"/><path d="M100 854c4 1 9-1 11-5M103 848h6" stroke="#fff" stroke-width="1.500" fill="none"/><path d="M99 858c4-1 10-6 13-13" stroke="#f0c000" fill="none"/>
<rect x="123" y="844" width="13" height="15" fill="#fff" stroke="#305020"/><path d="M127 852l8-10 3 2-8 10z" fill="#509030"/>
<circle cx="152.500" cy="851" r="7.500" fill="#1a6a6a" stroke="#082828"/><text x="148.500" y="855" style="font-size:11px;font-weight:bold;fill:#fff">N</text>
<circle cx="175" cy="851" r="7" fill="#f0f0f0" stroke="#e08020" stroke-width="2"/><path d="M172.500 847l6 4-6 4z" fill="#2040a0"/>
<circle cx="201" cy="854" r="5" fill="#f0d020"/><path d="M192 844l10 3 8-3-8 8z" fill="#d02020"/>
<circle cx="224" cy="844" r="2" fill="#e09010"/><path d="M224 847l-5 6-3 5M224 847l4 6 3 5M220 851h9" stroke="#e09010" stroke-width="2.500" fill="none"/>
<rect x="238" y="844" width="15" height="15" fill="#888" stroke="#b02020"/><path d="M240 846l11 11M251 846l-11 11" stroke="#222" stroke-width="1.500"/>
<rect x="261" y="851" width="14" height="8" fill="#1040a0"/><circle cx="264" cy="846" r="3" fill="#20a040"/><circle cx="268" cy="845" r="3" fill="#208030"/><circle cx="272" cy="847" r="3" fill="#20a040"/><text x="262" y="858.500" style="font-size:6.500px;fill:#fff;font-weight:bold">LITE</text>
</g>
<path d="M296 841v20" stroke="#fff" stroke-width="1.500"/><path d="M297.500 841v20" stroke="#808080"/>
<g fill="#d4d0c8">
<rect x="304.500" y="840.500" width="138" height="21"/><rect x="446.500" y="840.500" width="137.500" height="21"/><rect x="730.500" y="840.500" width="138" height="21"/>
</g>
<path d="M304.500 861.500V840.500H442.500M446.500 861.500V840.500H584M730.500 861.500V840.500H868.500" class="wh"/>
<path d="M304.500 861.500H442.500V840.500M446.500 861.500H584V840.500M730.500 861.500H868.500V840.500" stroke="#404040" fill="none"/>
<rect x="588.500" y="840.500" width="138" height="21" fill="#eeebe6"/><path d="M588.500 861.500V840.500H726.500" stroke="#404040" fill="none"/><path d="M588.500 861.500H726.500V840.500" class="wh"/>
<rect x="309" y="844" width="13" height="14" fill="#7aa8d8"/><path d="M309 848h17l-4 9h-10z" fill="#30a060"/><circle cx="316" cy="846" r="3" fill="#d0d0e0"/>
<text x="331.500" y="855" textLength="36" lengthAdjust="spacingAndGlyphs" style="fill:#000">[17:26]</text>
<circle cx="458" cy="848" r="3" fill="#e08020"/><circle cx="463" cy="845" r="2.500" fill="#20a040"/><path d="M452 858c1-6 3-8 6-8s4 3 4 8z" fill="#2070c0"/><path d="M460 858c0-5 2-9 5-9s2 5 2 9z" fill="#20a040"/>
<text x="467.500" y="855" textLength="75.500" lengthAdjust="spacingAndGlyphs" style="fill:#000">MSN Messenger</text>
<rect x="593" y="844" width="13" height="13" fill="#b8b8b8"/><rect x="595" y="846" width="9" height="9" fill="#30404e"/><path d="M596 854v-7l3.500 3 3.500-3v7" stroke="#e8e8e8" fill="none"/>
<text x="609.500" y="855" textLength="110.500" lengthAdjust="spacingAndGlyphs" style="fill:#000;font-weight:bold;font-size:12px">Sin título - 3ds ma...</text>
<path d="M735 860l5-11 3 3 5-4-2 7 4 3c-6 0-10 1-15 2z" fill="#208050"/><path d="M741 843h9v6h-5l-3 2v-2h-1z" fill="#fff" stroke="#5080c0" stroke-width=".7"/>
<text x="751.500" y="855" textLength="114.500" lengthAdjust="spacingAndGlyphs" style="fill:#000">schumi al culo de alon...</text>
<!-- tray -->
<path d="M1020.500 861.500V840.500H1149" stroke="#808080" fill="none"/><path d="M1020.500 861.500H1149V840.500" class="wh"/>
<path d="M1025 849h3l4-4v13l-4-4h-3z" fill="#e8d040" stroke="#333" stroke-width=".7"/><path d="M1034 848l2-1M1034 851h3M1034 854l2 1" stroke="#555"/>
<rect x="1042.500" y="843" width="15" height="16" fill="#101080"/><text x="1044" y="855" style="font-size:10.500px;fill:#fff">ES</text>
<rect x="1060" y="843" width="16" height="16" fill="#e02020"/><path d="M1064 845v12M1073 845l-9 6 9 6" stroke="#fff" stroke-width="2" fill="none"/>
<circle cx="1085" cy="846" r="3" fill="#208060"/><path d="M1079 859c0-6 2-9 6-9s6 3 6 9z" fill="#3060b0"/><rect x="1086" y="853" width="3" height="3" fill="#e03030"/><rect x="1089" y="856" width="3" height="3" fill="#e0c020"/>
<text x="1109" y="855" textLength="27" lengthAdjust="spacingAndGlyphs" style="fill:#000">17:26</text>
</svg>
</body></html>
